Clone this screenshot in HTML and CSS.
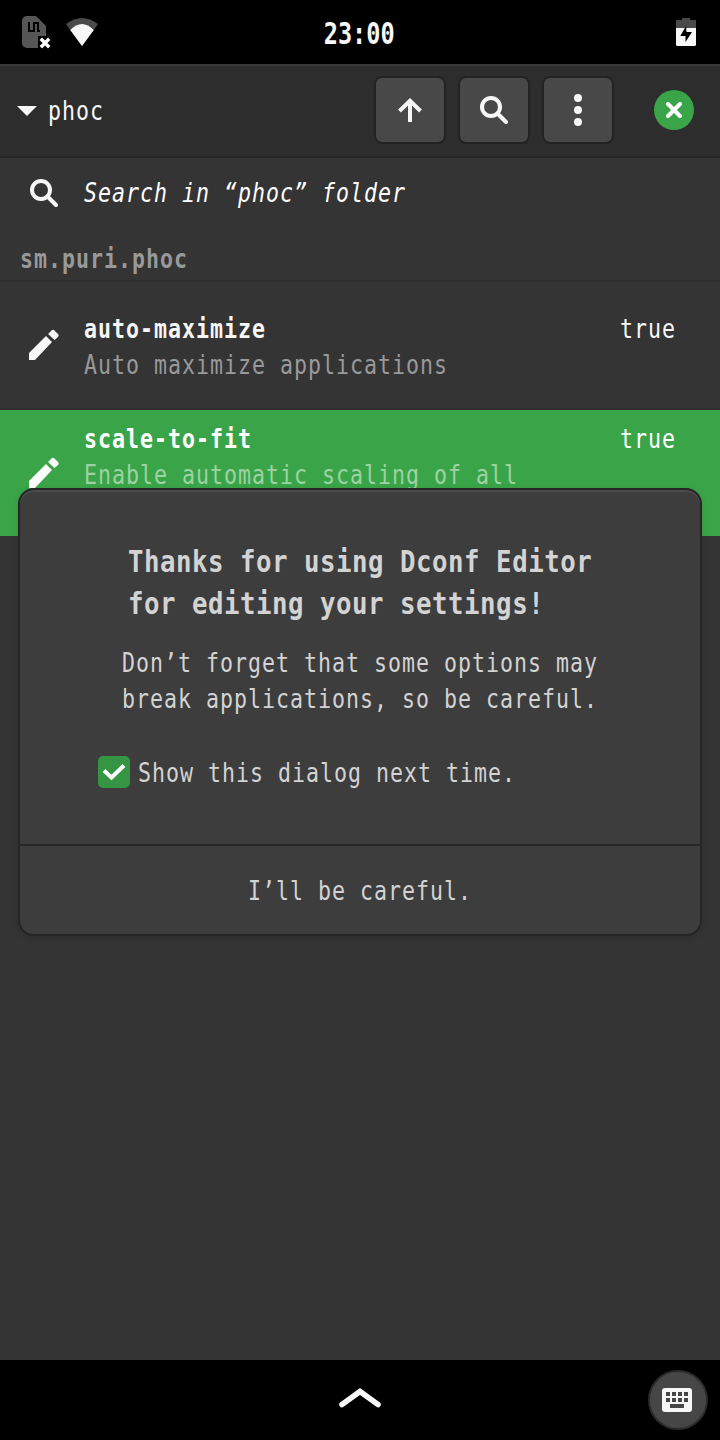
FILE: index.html
```html
<!DOCTYPE html>
<html lang="en">
<head>
<meta charset="utf-8">
<title>phoc</title>
<link rel="stylesheet" href="styles.css">
</head>
<body>
<div class="phone">
  <div class="statusbar">
    <div class="status-left">
      <svg width="30" height="34" viewBox="0 0 30 34"><path d="M5 1h9l10 10v10h-8v12H5a5 5 0 0 1-5-5V6a5 5 0 0 1 5-5z" fill="#565656"/><path d="M7 7v9h5V8h4v8h2" fill="none" stroke="#000" stroke-width="2"/><path d="M20 25l6 6m0-6l-6 6" stroke="#fff" stroke-width="3.400" stroke-linecap="square"/></svg>
      <svg width="32" height="30" viewBox="0 0 32 30"><path d="M0 7Q16-5 32 7L16 29z" fill="#4a4a4a"/><path d="M4.200 13Q16 1 27.800 13L16 29z" fill="#f7f7f7"/></svg>
    </div>
    <span class="clock">23:00</span>
    <svg class="battery" width="20" height="28" viewBox="0 0 20 28"><path d="M0 10V2h6V0h8v2h6v8z" fill="#4a4a4a"/><path d="M0 10h20v16.500q0 1.500-1.500 1.500h-17Q0 28 0 26.500z" fill="#f7f7f7"/><path d="M10 8L4.300 18H9.500V24L16 14h-5.500z" fill="#000"/></svg>
  </div>
  <div class="header">
    <svg class="caret" width="20" height="10" viewBox="0 0 20 10"><path d="M0 0h20L10 10z" fill="#f7f7f7"/></svg>
    <span class="txt path">phoc</span>
    <div class="tools">
      <button class="tool"><svg width="28" height="28" viewBox="0 0 28 28"><path d="M14 26V5M3.500 15L14 4.800l10.500 10.200" fill="none" stroke="#f7f7f7" stroke-width="4"/></svg></button>
      <button class="tool"><svg width="28" height="28" viewBox="0 0 28 28"><circle cx="11" cy="11" r="9" fill="none" stroke="#f7f7f7" stroke-width="4"/><path d="M17.500 17.500l8.500 8.500" stroke="#f7f7f7" stroke-width="4" stroke-linecap="round"/></svg></button>
      <button class="tool"><svg width="8" height="32" viewBox="0 0 8 32"><g fill="#f7f7f7"><circle cx="4" cy="4" r="4"/><circle cx="4" cy="16" r="4"/><circle cx="4" cy="28" r="4"/></g></svg></button>
    </div>
    <button class="close"><svg width="16" height="16" viewBox="0 0 16 16"><path d="M2 2l12 12M14 2L2 14" stroke="#fff" stroke-width="4" stroke-linecap="round"/></svg></button>
  </div>
  <div class="content">
    <div class="search-row">
      <svg width="28" height="28" viewBox="0 0 28 28"><circle cx="11" cy="11" r="9" fill="none" stroke="#f7f7f7" stroke-width="4"/><path d="M17.500 17.500l8.500 8.500" stroke="#f7f7f7" stroke-width="4" stroke-linecap="round"/></svg>
      <span class="txt italic">Search in “phoc” folder</span>
    </div>
    <div class="schema"><span class="txt bold">sm.puri.phoc</span></div>
    <div class="row">
      <svg class="pencil" width="32" height="32" viewBox="0 0 32 32"><path d="M1 31v-7L18 7l6 6L7 31zM20 5l3.500-3.500q1.500-1.500 3 0l3.500 3.500q1.500 1.500 0 3L26.500 11z" fill="#f7f7f7"/></svg>
      <div class="labels"><span class="txt bold">auto-maximize</span><span class="txt dim">Auto maximize applications</span></div>
      <span class="txt value">true</span>
    </div>
    <div class="row selected">
      <svg class="pencil" width="32" height="32" viewBox="0 0 32 32"><path d="M1 31v-7L18 7l6 6L7 31zM20 5l3.500-3.500q1.500-1.500 3 0l3.500 3.500q1.500 1.500 0 3L26.500 11z" fill="#fff"/></svg>
      <div class="labels"><span class="txt bold">scale-to-fit</span><span class="txt dim">Enable automatic scaling of all</span></div>
      <span class="txt value">true</span>
    </div>
  </div>
  <div class="bottombar">
    <svg class="chevron" width="42" height="20" viewBox="0 0 42 20"><path d="M3 16.500L21 3.500l18 13" fill="none" stroke="#f7f7f7" stroke-width="5.600" stroke-linecap="round"/></svg>
    <button class="keyboard"><svg width="30" height="24" viewBox="0 0 30 24"><rect width="30" height="24" rx="3" fill="#f7f7f7"/><path d="M4 4h4v4H4zM10 4h4v4h-4zM16 4h4v4h-4zM22 4h4v4h-4zM4 10h4v4H4zM10 10h4v4h-4zM16 10h4v4h-4zM22 10h4v4h-4zM8 16h14v4H8z" fill="#464646"/></svg></button>
  </div>
  <div class="dialog">
    <div class="dialog-body">
      <div class="title"><span>Thanks for using Dconf Editor</span><span>for editing your settings!</span></div>
      <div class="message"><span class="txt">Don’t forget that some options may</span><span class="txt">break applications, so be careful.</span></div>
      <div class="check-row">
        <span class="check"><svg width="24" height="18" viewBox="0 0 24 18"><path d="M2 7.500L9.500 14.500L22 2.500" fill="none" stroke="#fff" stroke-width="4"/></svg></span>
        <span class="txt">Show this dialog next time.</span>
      </div>
    </div>
    <button class="dialog-action"><span class="txt">I’ll be careful.</span></button>
  </div>
</div>
</body>
</html>
```
FILE: styles.css
```css
* { box-sizing: border-box; }
body { margin: 0; background: #333; }
svg { display: block; flex: none; }
button { padding: 0; border: 0; color: inherit; font: inherit; display: flex; align-items: center; justify-content: center; }
.phone {
  position: relative;
  width: 720px;
  height: 1440px;
  overflow: hidden;
  display: flex;
  flex-direction: column;
  color: #f7f7f7;
  background: #333;
  font-family: "DejaVu Sans Mono", monospace;
}
/* Condensed monospace: every character advances 14px */
.txt {
  display: block;
  white-space: pre;
  font-size: 26px;
  line-height: 36px;
  letter-spacing: 1.215px;
  transform: scaleX(.83);
  transform-origin: left;
}
.bold { font-weight: 700; }
.italic { font-style: italic; color: #fff; }
.dim { color: #999; }

.statusbar { height: 64px; background: #000; display: grid; grid-template-columns: 1fr auto 1fr; align-items: center; padding: 0 24px 0 22px; }
.status-left { display: flex; gap: 14px; align-items: center; }
.clock { font-size: 30px; font-weight: 700; line-height: 36px; transform: scaleX(.785); padding-top: 4px; }
.battery { justify-self: end; }

.header { height: 94px; background: #2d2d2d; border-top: 2px solid #3a3a3a; border-bottom: 2px solid #252525; display: flex; align-items: center; padding: 0 26px 2px 17px; }
.caret { margin-top: 2px; }
.path { width: 56px; margin: 2px 0 0 11px; }
.tools { display: flex; gap: 12px; margin-left: auto; }
.tool { width: 72px; height: 68px; border: 2px solid #232323; border-radius: 8px; background: #484848; }
.close { width: 40px; height: 40px; border-radius: 50%; background: #3aa548; margin-left: 40px; }

.content { flex: 1; background: #343434; }
.search-row { height: 70px; display: flex; align-items: center; gap: 26px; padding-left: 30px; }
.schema { height: 54px; padding: 13px 0 0 20px; border-bottom: 2px solid #2f2f2f; color: #999; }
.row { height: 128px; display: flex; padding: 29px 44px 0 28px; border-bottom: 2px solid #2f2f2f; }
.pencil { margin-top: 18px; }
.labels { width: 500px; margin-left: 24px; }
.value { width: 56px; margin-left: auto; }
.selected { height: 126px; padding-top: 11px; background: #3aa548; border: 0; color: #fff; }
.selected .pencil { margin-top: 36px; }
.selected .dim { color: #9dd2a4; }

.bottombar { height: 80px; background: #000; display: grid; grid-template-columns: 1fr auto 1fr; align-items: center; padding: 0 12px; }
.chevron { grid-column: 2; margin-top: -4px; }
.keyboard { justify-self: end; width: 60px; height: 60px; padding-right: 2px; border-radius: 50%; border: 2px solid #2b2b2b; background: #464646; }

/* Modal above the settings list */
.dialog { position: absolute; left: 18px; top: 488px; width: 684px; height: 448px; border: 2px solid #262626; border-radius: 16px; background: #3d3d3d; box-shadow: inset 0 2px #4b4b4b, 0 2px 6px rgba(0,0,0,.15); color: #d3d3d3; display: flex; flex-direction: column; }
.dialog-body { flex: 1; padding: 50px 78px 0; }
.title { margin-left: 30px; }
.title span { display: block; white-space: pre; font-size: 31px; font-weight: 700; line-height: 42px; letter-spacing: .62px; transform: scaleX(.83); transform-origin: left; }
.message { margin: 21px 0 0 24px; }
.check-row { display: flex; gap: 8px; margin-top: 38px; }
.check { width: 32px; height: 32px; margin-top: 1px; border-radius: 5px; background: #359543; display: flex; align-items: center; justify-content: center; }
.dialog-action { height: 90px; padding-top: 2px; border-top: 2px solid #262626; background: transparent; }
.dialog-action .txt { transform-origin: center; }
```
